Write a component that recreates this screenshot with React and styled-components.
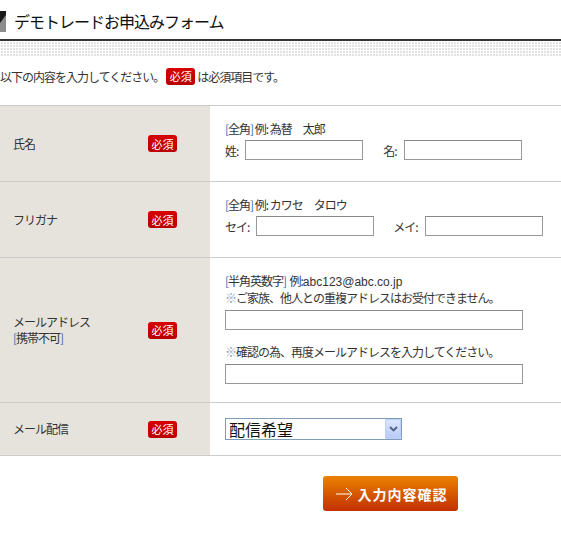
import React from 'react';
import styled, { createGlobalStyle } from 'styled-components';

const GlobalStyle = createGlobalStyle`
  html, body {
    margin: 0;
    padding: 0;
    background: #fff;
  }
  body {
    font-family: "Noto Sans CJK JP", "Liberation Sans", sans-serif;
    font-size: 12px;
    color: #333;
  }
`;

function App() {
  return (
    <>
      <GlobalStyle />
      <Page>
        <Header>
          <HeadIcon width="6" height="21" viewBox="0 0 6 21">
            <rect x="0" y="0" width="6" height="21" fill="#8c8c8c" />
            <polygon points="0,0 6,0 6,4 0,12" fill="#1a1a1a" />
          </HeadIcon>
          <Title>デモトレードお申込みフォーム</Title>
        </Header>
        <Band />

        <Intro>
          以下の内容を入力してください。<Badge>必須</Badge>は必須項目です。
        </Intro>

        <Form>
          <Row>
            <LabelCell>
              <LabelText>氏名</LabelText>
              <Badge>必須</Badge>
            </LabelCell>
            <FieldCell>
              <Note>
                <Bracket>[</Bracket>全角<Bracket>]</Bracket> 例: 為替　太郎
              </Note>
              <Fields>
                <FieldPair>
                  <span>姓:</span>
                  <TextInput $width={118} />
                </FieldPair>
                <FieldPair>
                  <span>名:</span>
                  <TextInput $width={118} />
                </FieldPair>
              </Fields>
            </FieldCell>
          </Row>

          <Row>
            <LabelCell>
              <LabelText>フリガナ</LabelText>
              <Badge>必須</Badge>
            </LabelCell>
            <FieldCell>
              <Note>
                <Bracket>[</Bracket>全角<Bracket>]</Bracket> 例: カワセ　タロウ
              </Note>
              <Fields $gap={19}>
                <FieldPair>
                  <span>セイ:</span>
                  <TextInput $width={118} />
                </FieldPair>
                <FieldPair>
                  <span>メイ:</span>
                  <TextInput $width={118} />
                </FieldPair>
              </Fields>
            </FieldCell>
          </Row>

          <Row>
            <LabelCell>
              <LabelText>
                メールアドレス
                <br />
                <Bracket>[</Bracket>携帯不可<Bracket>]</Bracket>
              </LabelText>
              <Badge>必須</Badge>
            </LabelCell>
            <FieldCell $bottom={18}>
              <Note>
                <Bracket>[</Bracket>半角英数字<Bracket>]</Bracket>&nbsp; 例:<Latin>abc123@abc.co.jp</Latin>
              </Note>
              <Note>
                <Mark>※</Mark>ご家族、他人との重複アドレスはお受付できません。
              </Note>
              <TextInput $width={298} $top={4} />
              <Note $top={14}>
                <Mark>※</Mark>確認の為、再度メールアドレスを入力してください。
              </Note>
              <TextInput $width={298} $top={4} />
            </FieldCell>
          </Row>

          <Row>
            <LabelCell>
              <LabelText>メール配信</LabelText>
              <Badge>必須</Badge>
            </LabelCell>
            <FieldCell $top={15} $bottom={15}>
              <SelectWrap>
                <Select defaultValue="yes">
                  <option value="yes">配信希望</option>
                  <option value="no">配信不要</option>
                </Select>
                <SelectArrow>
                  <svg width="9" height="6" viewBox="0 0 9 6">
                    <path d="M1 1 L4.5 4.5 L8 1" fill="none" stroke="#4d6185" strokeWidth="1.8" />
                  </svg>
                </SelectArrow>
              </SelectWrap>
            </FieldCell>
          </Row>
        </Form>

        <Footer>
          <SubmitButton type="button">
            <svg width="18" height="14" viewBox="0 0 18 14">
              <path d="M0 7 H16 M10 1 L16 7 L10 13" fill="none" stroke="#fff" strokeWidth="1" />
            </svg>
            入力内容確認
          </SubmitButton>
        </Footer>
      </Page>
    </>
  );
}

const Page = styled.div`
  width: 561px;
  min-height: 534px;
  overflow: hidden;
`;

const Header = styled.div`
  display: flex;
  align-items: center;
  gap: 8px;
  height: 41px;
  padding-top: 3px;
  box-sizing: border-box;
  border-bottom: 2px solid #333;
`;

const HeadIcon = styled.svg`
  display: block;
  flex: none;
`;

const Title = styled.h1`
  margin: 0;
  font-size: 16px;
  font-weight: normal;
  letter-spacing: -1px;
  color: #111;
`;

const Band = styled.div`
  height: 15px;
  background-color: #e2e2e2;
  background-image:
    linear-gradient(to right, #fff 1px, transparent 1px),
    linear-gradient(to bottom, #fff 1px, transparent 1px);
  background-size: 3px 3px;
`;

const Intro = styled.p`
  display: flex;
  align-items: center;
  margin: 11px 0 20px 0;
  height: 18px;
  letter-spacing: -1px;
  white-space: nowrap;
`;

const Badge = styled.span`
  display: inline-flex;
  align-items: center;
  justify-content: center;
  flex: none;
  width: 29px;
  height: 17px;
  border-radius: 3px;
  background: linear-gradient(#d80000, #b80000);
  color: #fff;
  font-size: 11px;
  letter-spacing: 0;
  margin: 0 2px;
`;

const Form = styled.div`
  border-top: 1px solid #ccc;
`;

const Row = styled.div`
  display: grid;
  grid-template-columns: 210px 1fr;
  border-bottom: 1px solid #ccc;
`;

const LabelCell = styled.div`
  display: flex;
  align-items: center;
  padding-left: 13px;
  background: #e6e3dc;
`;

const LabelText = styled.div`
  width: 133px;
  line-height: 16px;
  letter-spacing: -1px;
`;

const FieldCell = styled.div`
  padding: ${(p) => p.$top ?? 15}px 15px ${(p) => p.$bottom ?? 21}px 15px;
  display: flex;
  flex-direction: column;
  align-items: flex-start;
`;

const Note = styled.div`
  line-height: 16px;
  margin-top: ${(p) => p.$top ?? 0}px;
  letter-spacing: -1px;
  white-space: nowrap;
`;

const Bracket = styled.span`
  color: #3d6fb6;
`;

const Mark = styled.span`
  color: #8a9cc0;
`;

const Latin = styled.span`
  font-family: "Liberation Sans", Arial, sans-serif;
  letter-spacing: 0;
`;

const Fields = styled.div`
  display: flex;
  gap: ${(p) => p.$gap ?? 20}px;
  margin-top: 3px;
`;

const FieldPair = styled.label`
  display: flex;
  align-items: center;
  gap: 7px;
  letter-spacing: -1px;
`;

const TextInput = styled.input.attrs({ type: 'text' })`
  box-sizing: border-box;
  width: ${(p) => p.$width}px;
  height: 20px;
  margin: ${(p) => p.$top ?? 0}px 0 0 0;
  padding: 1px 3px;
  border: 1px solid #999;
  border-top-color: #888;
  background: #fff;
  font-size: 12px;
  outline: none;
`;

const SelectWrap = styled.div`
  position: relative;
  width: 177px;
  height: 22px;
`;

const Select = styled.select`
  appearance: none;
  box-sizing: border-box;
  width: 100%;
  height: 100%;
  padding: 0 20px 0 3px;
  border: 1px solid #7f9db9;
  border-radius: 0;
  background: #fff;
  font-family: "Noto Sans CJK JP", sans-serif;
  font-size: 16px;
  line-height: 18px;
  color: #111;
  outline: none;
`;

const SelectArrow = styled.span`
  position: absolute;
  top: 1px;
  right: 1px;
  width: 16px;
  height: 20px;
  box-sizing: border-box;
  display: flex;
  align-items: center;
  justify-content: center;
  border: 1px solid #bccff7;
  border-radius: 1px;
  background: linear-gradient(#dbe5fd, #b9cbf7);
  pointer-events: none;
`;

const Footer = styled.div`
  padding: 20px 0 0 323px;
`;

const SubmitButton = styled.button`
  display: flex;
  align-items: center;
  justify-content: center;
  gap: 4px;
  width: 135px;
  height: 35px;
  padding: 0 0 0 2px;
  border: none;
  border-radius: 3px;
  background: linear-gradient(#ea8200, #c23000);
  color: #fff;
  font-family: "Noto Sans CJK JP", sans-serif;
  font-size: 14px;
  font-weight: bold;
  letter-spacing: 1px;
  cursor: pointer;
`;

export default App;
